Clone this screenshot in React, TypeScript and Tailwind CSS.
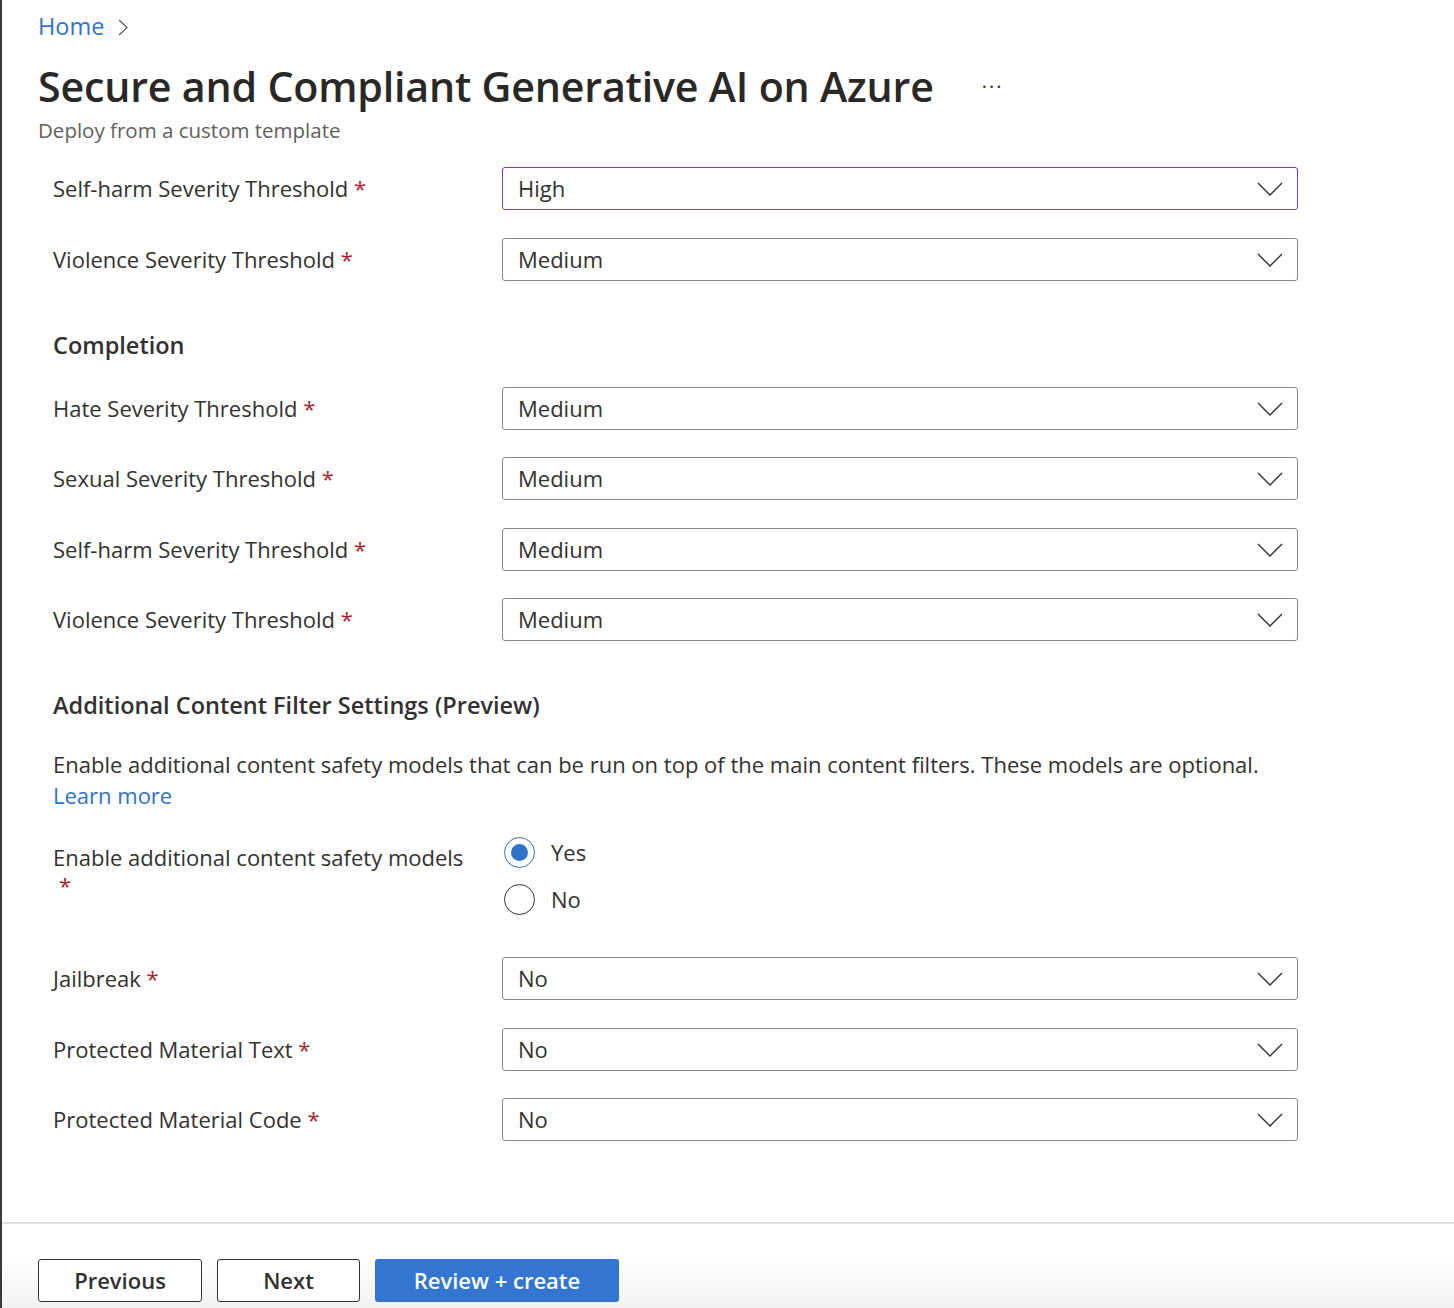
const font = { fontFamily: '"Open Sans", "Noto Sans", sans-serif' };

function Chevron() {
  return (
    <svg width="26" height="14" viewBox="0 0 26 14" fill="none" className="text-[#323130]">
      <polyline points="1,1 13,13 25,1" stroke="currentColor" strokeWidth="1.4" />
    </svg>
  );
}

function Label({ text }: { text: string }) {
  return (
    <div className="text-[22px] text-[#323130]">
      {text} <span className="text-[#a4262c]">*</span>
    </div>
  );
}

function Dropdown({ value, focused = false }: { value: string; focused?: boolean }) {
  return (
    <div
      className={`flex h-[43px] w-[796px] items-center justify-between rounded-[3px] border bg-white pl-[15px] pr-[14px] ${
        focused ? 'border-[#8a3ab9]' : 'border-[#8a8886]'
      }`}
    >
      <span className="text-[22px] text-[#323130]">{value}</span>
      <Chevron />
    </div>
  );
}

function Row({ label, value, focused, className = '' }: { label: string; value: string; focused?: boolean; className?: string }) {
  return (
    <div className={`flex items-center ${className}`}>
      <div className="w-[449px]">
        <Label text={label} />
      </div>
      <Dropdown value={value} focused={focused} />
    </div>
  );
}

function Radio({ label, checked }: { label: string; checked?: boolean }) {
  return (
    <div className="flex h-[31px] items-center gap-[16px]">
      <div
        className={`flex h-[31px] w-[31px] items-center justify-center rounded-full border ${
          checked ? 'border-[#2f72c9]' : 'border-[#323130]'
        }`}
      >
        {checked && <div className="h-[17px] w-[17px] rounded-full bg-[#2f72c9]" />}
      </div>
      <span className="text-[22px] text-[#323130]">{label}</span>
    </div>
  );
}

export default function App() {
  return (
    <div className="flex h-[1308px] w-[1454px] flex-col border-l-2 border-[#3a3a3a] bg-white" style={font}>
      <div className="flex-1 pl-[36px]">
        {/* breadcrumb */}
        <div className="mt-[11px] flex h-[32px] items-center gap-[14px]">
          <span className="text-[23.5px] text-[#2f72c9]">Home</span>
          <svg width="10" height="17" viewBox="0 0 10 17" fill="none" className="text-[#605e5c]">
            <polyline points="1,1 9,8.5 1,16" stroke="currentColor" strokeWidth="1.3" />
          </svg>
        </div>

        {/* title */}
        <div className="mt-[18px] flex h-[52px] items-center">
          <h1 className="text-[41.2px] font-semibold tracking-[-0.2px] text-[#292827]">
            Secure and Compliant Generative AI on Azure
          </h1>
          <span className="ml-[48px] text-[20px] leading-none tracking-[2px] text-[#323130]">···</span>
        </div>
        <div className="mt-[3px] h-[28px] text-[20.5px] leading-[28px] text-[#605e5c]">Deploy from a custom template</div>

        {/* form */}
        <div className="pl-[15px]">
          <Row className="mt-[23px]" label="Self-harm Severity Threshold" value="High" focused />
          <Row className="mt-[28px]" label="Violence Severity Threshold" value="Medium" />

          <div className="mt-[50px] h-[28px] text-[23.5px] font-semibold leading-[28px] text-[#323130]">Completion</div>

          <Row className="mt-[28px]" label="Hate Severity Threshold" value="Medium" />
          <Row className="mt-[27px]" label="Sexual Severity Threshold" value="Medium" />
          <Row className="mt-[28px]" label="Self-harm Severity Threshold" value="Medium" />
          <Row className="mt-[27px]" label="Violence Severity Threshold" value="Medium" />

          <div className="mt-[50px] h-[28px] text-[23.5px] font-semibold leading-[28px] text-[#323130]">
            Additional Content Filter Settings (Preview)
          </div>

          <div className="mt-[30px] text-[22px] leading-[31px] text-[#323130]">
            Enable additional content safety models that can be run on top of the main content filters. These models are optional.
            <br />
            <span className="text-[#2f72c9]">Learn more</span>
          </div>

          <div className="mt-[27px] flex">
            <div className="w-[451px] pt-[5px] pr-[20px] text-[22px] leading-[28px] text-[#323130]">
              Enable additional content safety models
              <div className="pl-[6px] text-[#a4262c]">*</div>
            </div>
            <div className="-mt-[1px] flex flex-col gap-[16px]">
              <Radio label="Yes" checked />
              <Radio label="No" />
            </div>
          </div>

          <Row className="mt-[42px]" label="Jailbreak" value="No" />
          <Row className="mt-[28px]" label="Protected Material Text" value="No" />
          <Row className="mt-[27px]" label="Protected Material Code" value="No" />
        </div>
      </div>

      {/* footer */}
      <div className="h-[86px] border-t-2 border-[#e1dfdd] bg-gradient-to-b from-white from-40% to-[#f2f2f2] pl-[36px] pt-[35px]">
        <div className="flex gap-[15px]">
          <button className="h-[43px] w-[164px] rounded-[3px] border border-[#323130] bg-white text-[22px] font-semibold text-[#323130]">
            Previous
          </button>
          <button className="h-[43px] w-[143px] rounded-[3px] border border-[#323130] bg-white text-[22px] font-semibold text-[#323130]">
            Next
          </button>
          <button className="h-[43px] w-[244px] rounded-[3px] bg-[#3276d1] text-[22px] font-semibold text-white">
            Review + create
          </button>
        </div>
      </div>
    </div>
  );
}
